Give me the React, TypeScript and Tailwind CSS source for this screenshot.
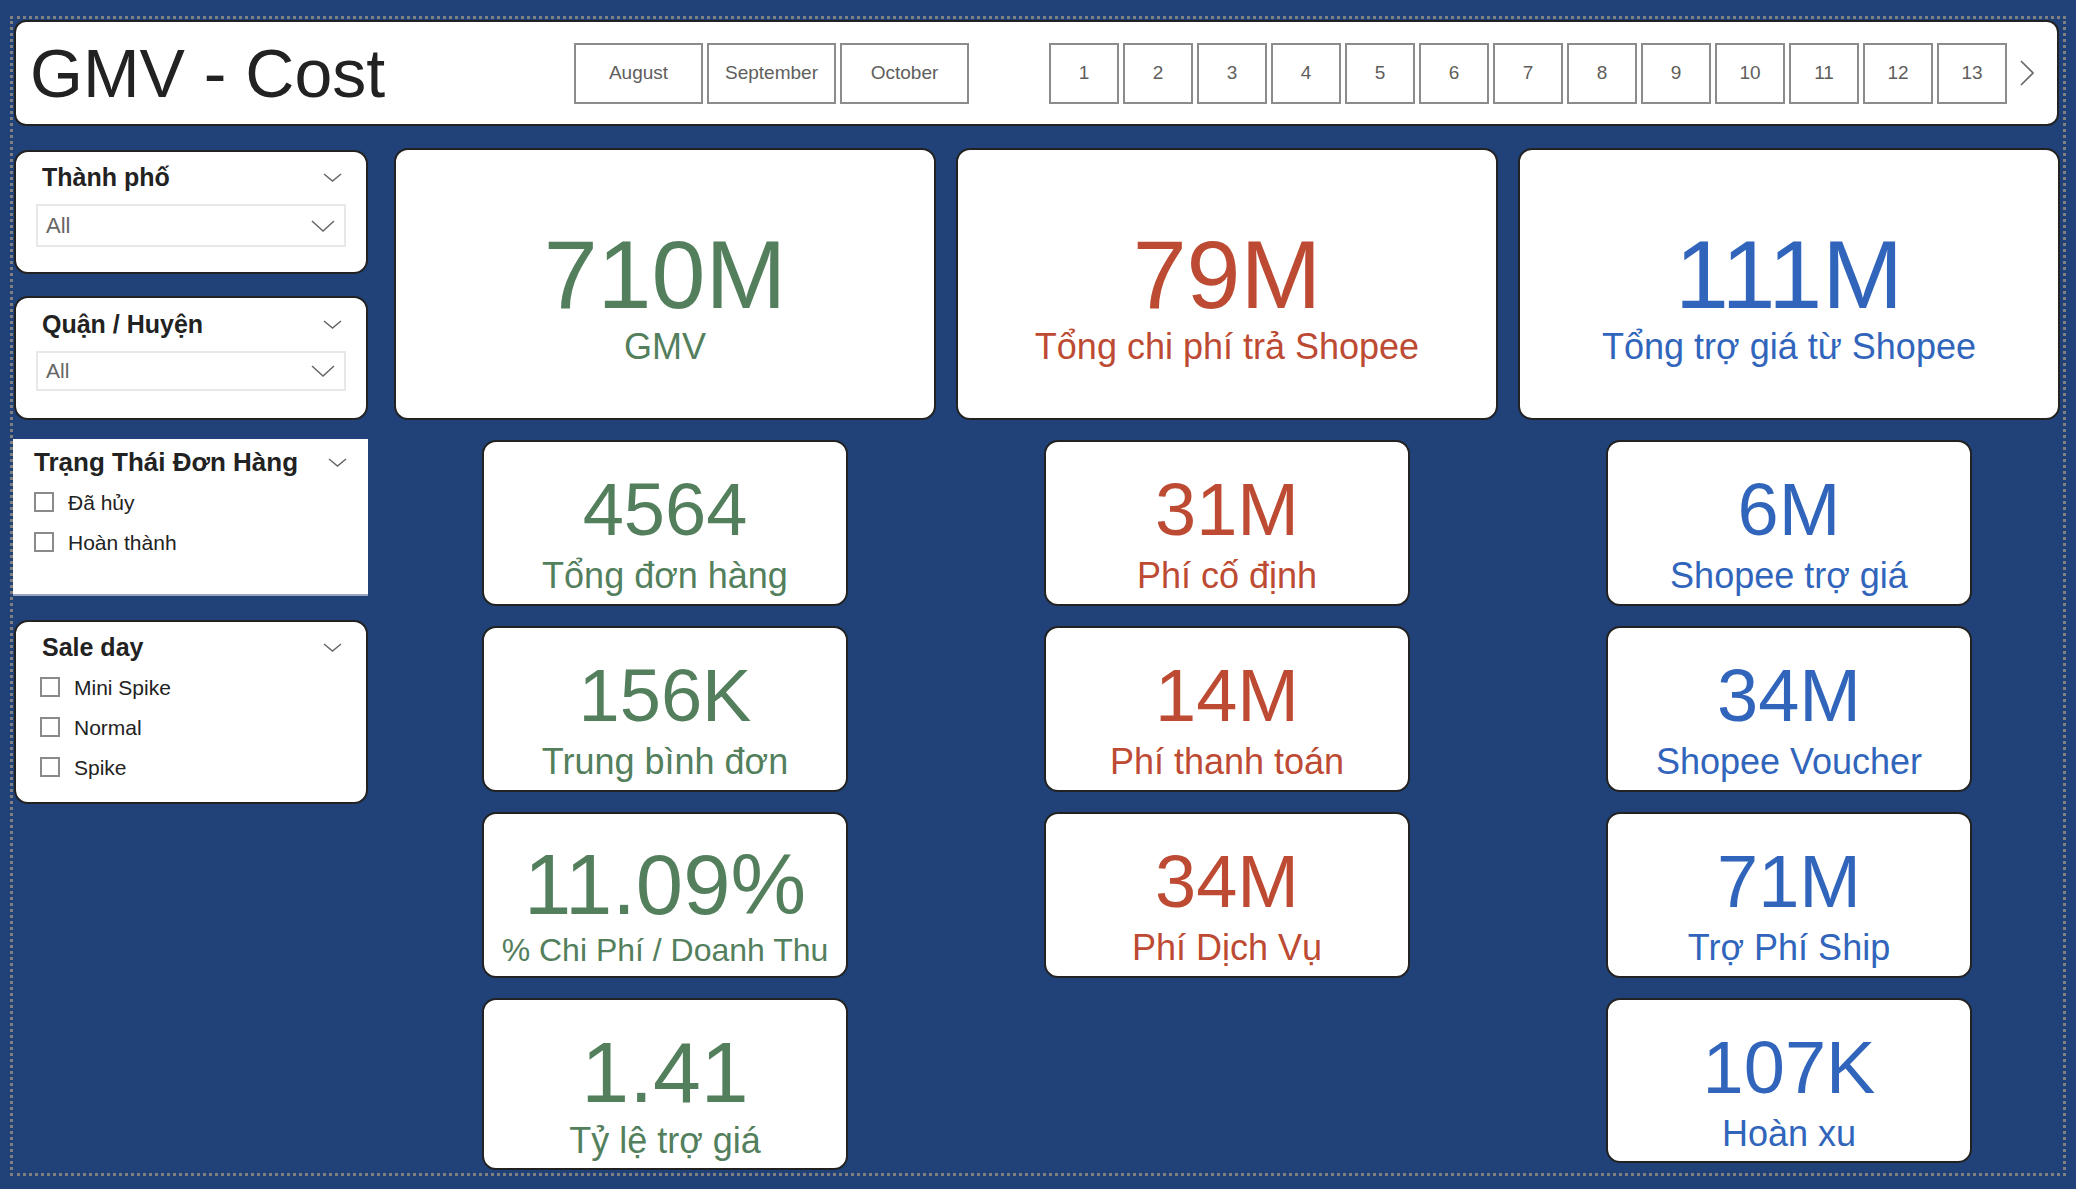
import React from "react";

const GREEN = "text-[#537f5d]";
const RED = "text-[#bd4a32]";
const BLUE = "text-[#3165bb]";

function Chevron({ w = 19, h = 9 }: { w?: number; h?: number }) {
  return (
    <svg width={w} height={h} viewBox={`0 0 ${w} ${h}`} className="shrink-0">
      <polyline points={`1,1 ${w / 2},${h - 1} ${w - 1},1`} fill="none" stroke="#666" strokeWidth="1.5" />
    </svg>
  );
}

function Checkbox({ label }: { label: string }) {
  return (
    <div className="flex items-center h-[20px]">
      <span className="w-[20px] h-[20px] border-2 border-[#8a8a8a] bg-white"></span>
      <span className="ml-[14px] text-[21px] leading-none text-[#222]">{label}</span>
    </div>
  );
}

function BigCard({ value, label, color }: { value: string; label: string; color: string }) {
  return (
    <div className={`w-full h-[272px] bg-white border-2 border-[#222] rounded-[14px] flex flex-col items-center pt-[76px] ${color}`}>
      <div className="text-[97px] leading-none">{value}</div>
      <div className="text-[36px] leading-none mt-[6px]">{label}</div>
    </div>
  );
}

function SmallCard({
  value,
  label,
  color,
  h = "h-[166px]",
  pt = "pt-[31px]",
  vs = "text-[74px]",
  ls = "text-[36px]",
  mt = "mt-[11px]",
}: {
  value: string;
  label: string;
  color: string;
  h?: string;
  pt?: string;
  vs?: string;
  ls?: string;
  mt?: string;
}) {
  return (
    <div className={`w-[366px] ${h} bg-white border-2 border-[#222] rounded-[14px] flex flex-col items-center ${pt} ${color}`}>
      <div className={`${vs} leading-none`}>{value}</div>
      <div className={`${ls} leading-none whitespace-nowrap ${mt}`}>{label}</div>
    </div>
  );
}

export default function App() {
  const months = ["August", "September", "October"];
  const weeks = Array.from({ length: 13 }, (_, i) => String(i + 1));

  return (
    <div className="w-[2076px] h-[1189px] bg-[#204279] pl-[10px] pt-[16px] font-['Liberation_Sans',Arial,sans-serif]">
      <div className="w-[2056px] h-[1160px] border-[3px] border-dotted border-[#808080] pl-px pt-px">
        {/* header */}
        <div className="w-[2045px] h-[106px] bg-white border-2 border-[#222] rounded-[12px] flex items-center">
          <div className="w-[558px] pl-[14px] text-[68px] leading-none text-[#222]">GMV - Cost</div>
          <div className="flex gap-[4px]">
            {months.map((m) => (
              <div key={m} className="w-[129px] h-[61px] border-2 border-[#8c8c8c] flex items-center justify-center text-[19px] text-[#605e5c]">
                {m}
              </div>
            ))}
          </div>
          <div className="flex gap-[4px] ml-[80px]">
            {weeks.map((n) => (
              <div key={n} className="w-[70px] h-[61px] border-2 border-[#8c8c8c] flex items-center justify-center text-[19px] text-[#605e5c]">
                {n}
              </div>
            ))}
          </div>
          <svg width="16" height="26" viewBox="0 0 16 26" className="ml-[12px]">
            <polyline points="2,1 14,13 2,25" fill="none" stroke="#666" strokeWidth="1.6" />
          </svg>
        </div>

        <div className="flex mt-[22px]">
          {/* slicers */}
          <div className="w-[354px] pt-[2px] flex flex-col">
            <div className="h-[124px] bg-white border-2 border-[#222] rounded-[14px] px-[20px] pt-[13px]">
              <div className="flex items-center justify-between pl-[6px] pr-[4px]">
                <span className="text-[25px] font-bold leading-none text-[#222]">Thành phố</span>
                <Chevron />
              </div>
              <div className="mt-[14px] h-[43px] border-2 border-[#e8e8e8] flex items-center justify-between pl-[8px] pr-[9px]">
                <span className="text-[22px] text-[#666]">All</span>
                <Chevron w={24} h={12} />
              </div>
            </div>

            <div className="mt-[22px] h-[124px] bg-white border-2 border-[#222] rounded-[14px] px-[20px] pt-[14px]">
              <div className="flex items-center justify-between pl-[6px] pr-[4px]">
                <span className="text-[25px] font-bold leading-none text-[#222]">Quận / Huyện</span>
                <Chevron />
              </div>
              <div className="mt-[14px] h-[40px] border-2 border-[#e8e8e8] flex items-center justify-between pl-[8px] pr-[9px]">
                <span className="text-[21px] text-[#666]">All</span>
                <Chevron w={24} h={12} />
              </div>
            </div>

            <div className="mt-[19px] h-[157px] bg-white border-b-2 border-[#9aa6c2] pl-[21px] pr-[21px] pt-[10px] -ml-px">
              <div className="flex items-center justify-between">
                <span className="text-[26px] font-bold leading-none text-[#222]">Trạng Thái Đơn Hàng</span>
                <Chevron />
              </div>
              <div className="mt-[17px] flex flex-col gap-[20px]">
                <Checkbox label="Đã hủy" />
                <Checkbox label="Hoàn thành" />
              </div>
            </div>

            <div className="mt-[24px] h-[184px] bg-white border-2 border-[#222] rounded-[14px] pl-[24px] pr-[24px] pt-[13px]">
              <div className="flex items-center justify-between pl-[2px]">
                <span className="text-[25px] font-bold leading-none text-[#222]">Sale day</span>
                <Chevron />
              </div>
              <div className="mt-[17px] flex flex-col gap-[20px]">
                <Checkbox label="Mini Spike" />
                <Checkbox label="Normal" />
                <Checkbox label="Spike" />
              </div>
            </div>
          </div>

          {/* cards */}
          <div className="ml-[26px] w-[1666px] grid grid-cols-3 gap-x-[20px]">
            <div className="flex flex-col items-center gap-[20px]">
              <BigCard value="710M" label="GMV" color={GREEN} />
              <SmallCard value="4564" label="Tổng đơn hàng" color={GREEN} />
              <SmallCard value="156K" label="Trung bình đơn" color={GREEN} />
              <SmallCard value="11.09%" label="% Chi Phí / Doanh Thu" color={GREEN} pt="pt-[28px]" vs="text-[85px]" ls="text-[32px]" mt="mt-[7px]" />
              <SmallCard value="1.41" label="Tỷ lệ trợ giá" color={GREEN} h="h-[172px]" pt="pt-[29px]" vs="text-[86px]" mt="mt-[8px]" />
            </div>
            <div className="flex flex-col items-center gap-[20px]">
              <BigCard value="79M" label="Tổng chi phí trả Shopee" color={RED} />
              <SmallCard value="31M" label="Phí cố định" color={RED} />
              <SmallCard value="14M" label="Phí thanh toán" color={RED} />
              <SmallCard value="34M" label="Phí Dịch Vụ" color={RED} />
            </div>
            <div className="flex flex-col items-center gap-[20px]">
              <BigCard value="111M" label="Tổng trợ giá từ Shopee" color={BLUE} />
              <SmallCard value="6M" label="Shopee trợ giá" color={BLUE} />
              <SmallCard value="34M" label="Shopee Voucher" color={BLUE} />
              <SmallCard value="71M" label="Trợ Phí Ship" color={BLUE} />
              <SmallCard value="107K" label="Hoàn xu" color={BLUE} h="h-[165px]" />
            </div>
          </div>
        </div>
      </div>
    </div>
  );
}
